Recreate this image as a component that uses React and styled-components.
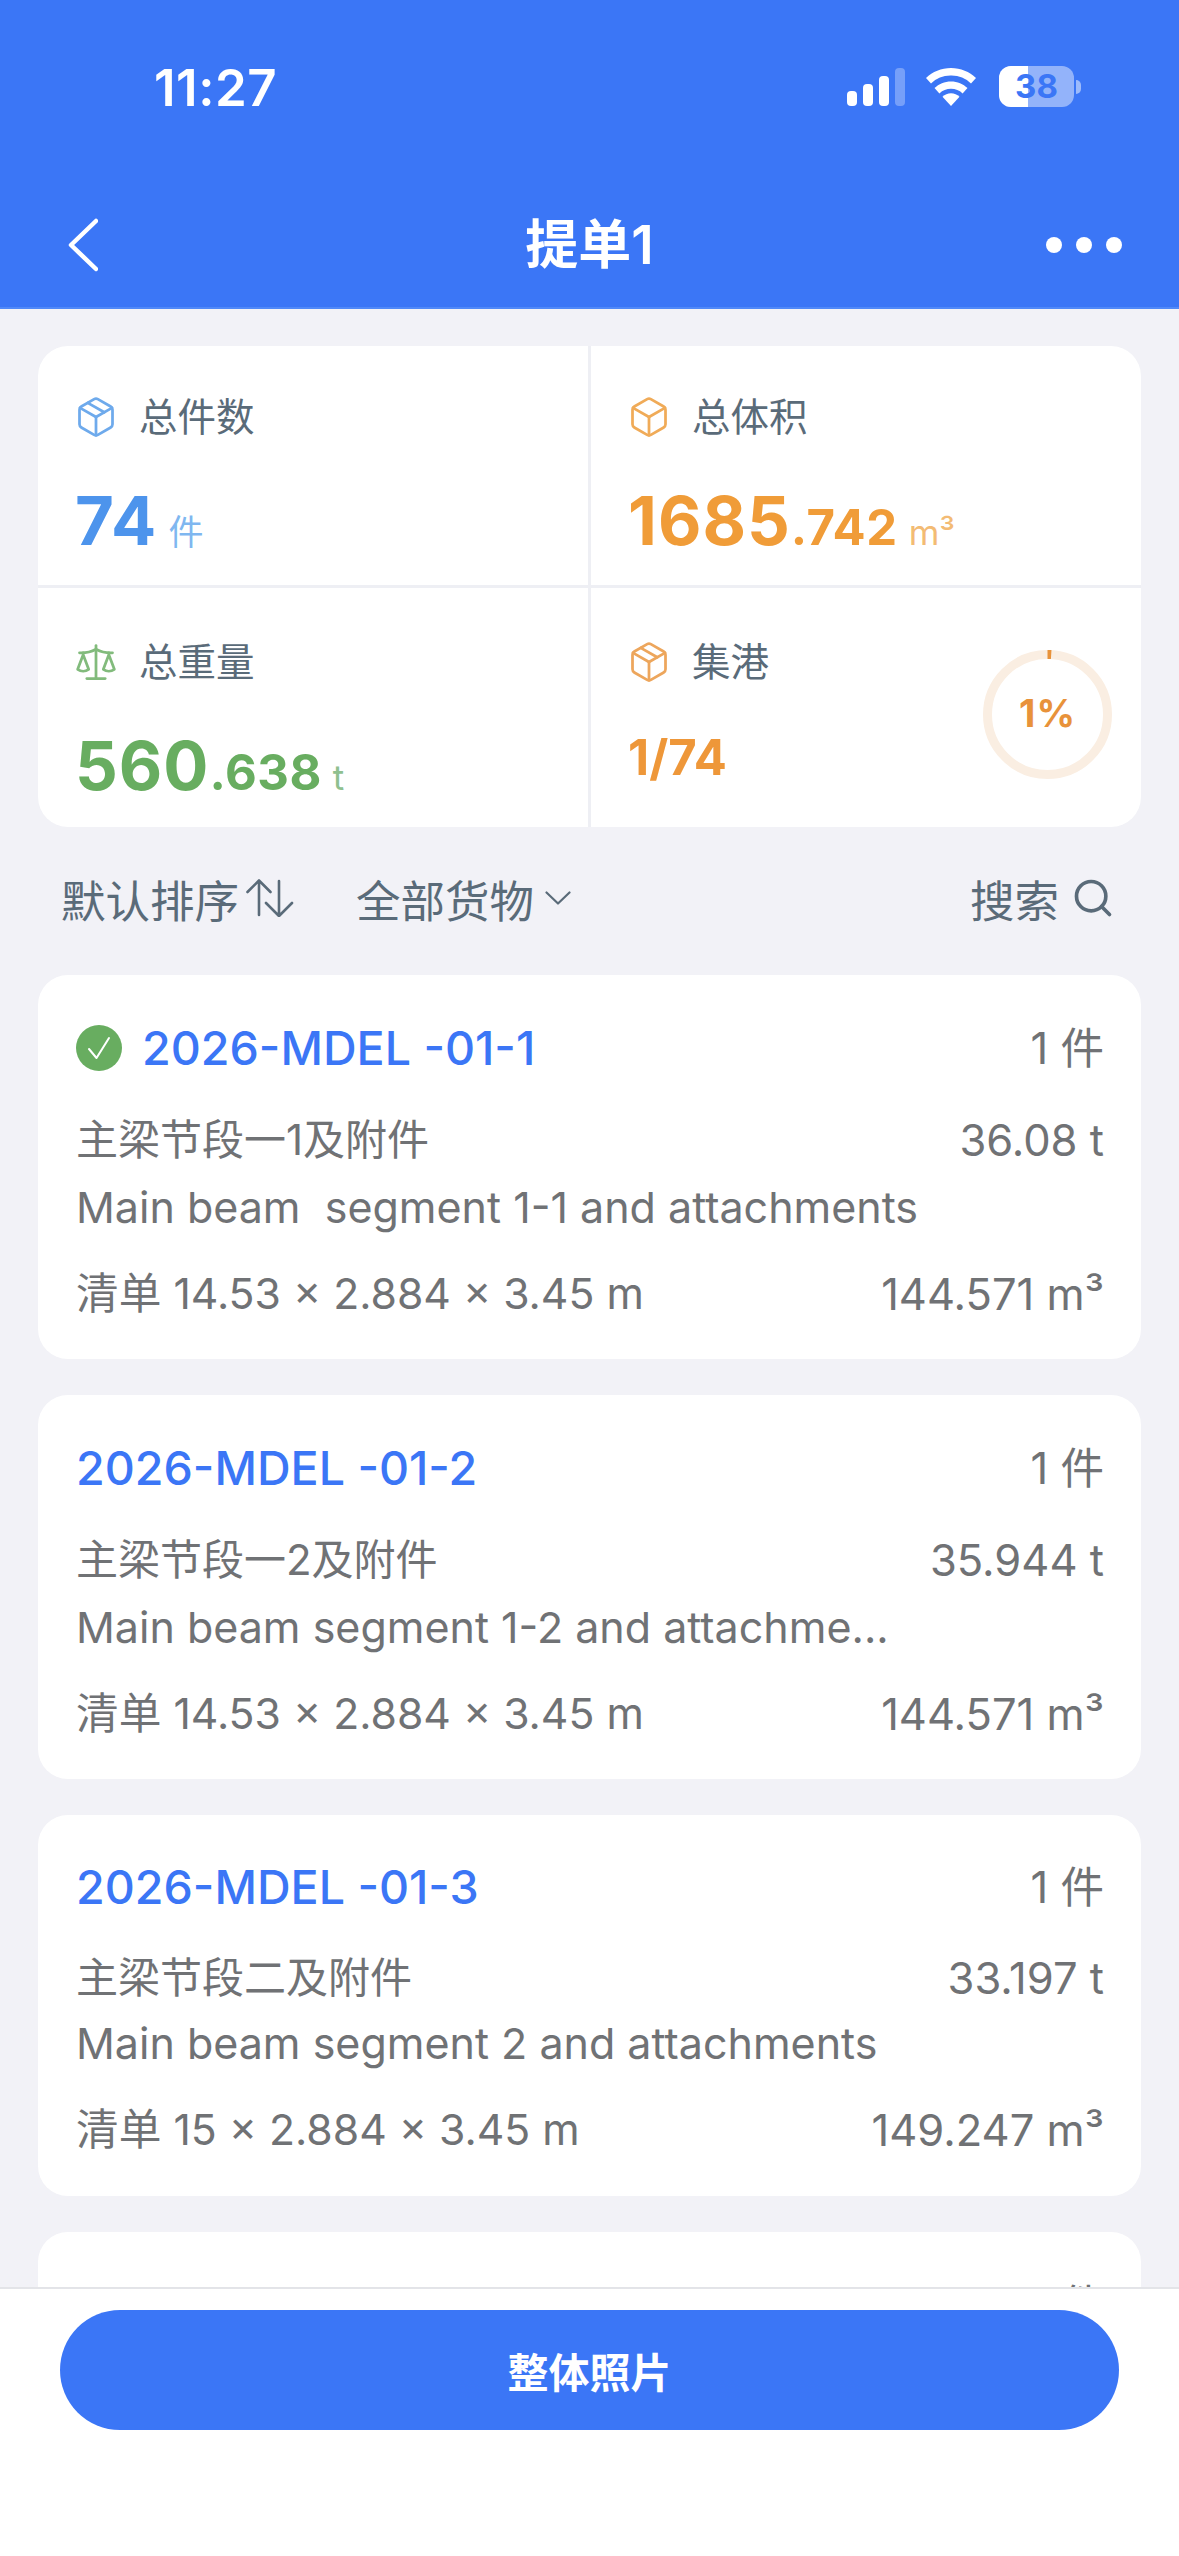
import React from "react";
import styled, { createGlobalStyle } from "styled-components";
import { Package, Box, Scale, Search } from "lucide-react";

const Global = createGlobalStyle`
  html, body { margin: 0; padding: 0; background: #f2f2f7; }
  * { box-sizing: border-box; }
`;

const sans = `Inter, "Noto Sans CJK SC", sans-serif`;

const Page = styled.div`
  width: 1179px;
  height: 2556px;
  display: flex;
  flex-direction: column;
  overflow: hidden;
  background: #f2f2f7;
  font-family: ${sans};
`;

const Header = styled.header`
  height: 309px;
  flex: none;
  background: #3b76f6;
  border-bottom: 2px solid #5089f8;
  color: #fff;
`;

const StatusBar = styled.div`
  height: 108px;
  padding: 60px 98px 0 154px;
  display: flex;
  justify-content: space-between;
  align-items: flex-start;
`;

const Time = styled.div`
  font-size: 51px;
  line-height: 56px;
  font-weight: 600;
  letter-spacing: 0.5px;
`;

const StatusIcons = styled.div`
  display: flex;
  align-items: center;
  margin-top: 6px;
`;

const Battery = styled.div`
  position: relative;
  width: 75px;
  height: 41px;
  margin-left: 23px;
  border-radius: 12px;
  background: rgba(255, 255, 255, 0.45);
  overflow: hidden;
  &::before {
    content: "";
    position: absolute;
    inset: 0 auto 0 0;
    width: 29px;
    background: #fff;
  }
`;

const BatteryText = styled.span`
  position: absolute;
  inset: 0;
  text-align: center;
  font-size: 33px;
  line-height: 41px;
  font-weight: 700;
  color: #3b76f6;
`;

const BatteryNib = styled.div`
  width: 5px;
  height: 14px;
  margin-left: 2px;
  border-radius: 0 5px 5px 0;
  background: rgba(255, 255, 255, 0.5);
`;

const NavBar = styled.nav`
  height: 90px;
  margin-top: 92px;
  padding: 0 57px;
  display: grid;
  grid-template-columns: 1fr auto 1fr;
  align-items: center;
`;

const BackButton = styled.span`
  display: flex;
  margin-left: 11px;
`;

const Title = styled.h1`
  margin: 0;
  font-size: 53px;
  line-height: 60px;
  font-weight: 600;
`;

const Dots = styled.div`
  justify-self: end;
  display: flex;
  gap: 14px;
`;

const Dot = styled.span`
  width: 16px;
  height: 16px;
  border-radius: 50%;
  background: #fff;
`;

const Content = styled.main`
  flex: 1;
  min-height: 0;
  overflow: hidden;
  padding: 37px 38px 0;
`;

const StatsCard = styled.section`
  display: grid;
  grid-template-columns: 1fr 1fr;
  grid-auto-rows: 239px;
  gap: 3px;
  background: #eeeff4;
  border-radius: 30px;
  overflow: hidden;
`;

const StatCell = styled.div`
  position: relative;
  background: #fff;
  padding: ${(p) => (p.$bottom ? "52px" : "49px")} 37px 0;
`;

const StatLabel = styled.div`
  display: flex;
  align-items: center;
  gap: 21px;
  height: 44px;
  font-size: 38.5px;
  line-height: 44px;
  color: #5a6b79;
  & > svg {
    margin-left: -1px;
  }
`;

const ValueRow = styled.div`
  display: flex;
  align-items: baseline;
  margin-top: 47px;
  font-weight: 700;
  font-size: 67px;
  line-height: 70px;
  letter-spacing: 1px;
  color: ${(p) => p.$color};
`;

const Decimal = styled.span`
  font-size: 49px;
  letter-spacing: 0.5px;
`;

const Unit = styled.span`
  margin-left: 11px;
  font-weight: 400;
  font-size: 35px;
  letter-spacing: 0;
  color: ${(p) => p.$color};
`;

const Small = styled.div`
  margin-top: 46px;
  font-weight: 700;
  font-size: 49px;
  line-height: 56px;
  color: #ee9739;
`;

const Ring = styled.div`
  position: absolute;
  right: 29px;
  top: 62px;
  width: 129px;
  height: 129px;
`;

const RingText = styled.span`
  position: absolute;
  inset: 0;
  padding-bottom: 4px;
  display: flex;
  align-items: center;
  justify-content: center;
  font-weight: 700;
  font-size: 38px;
  letter-spacing: 1px;
  color: #e8923a;
`;

const SortBar = styled.div`
  height: 148px;
  padding: 0 26px 6px 23px;
  display: flex;
  align-items: center;
  color: #5a6b79;
  font-size: 44.5px;
`;

const SortItem = styled.div`
  display: flex;
  align-items: center;
  gap: ${(p) => p.$gap}px;
  margin-left: ${(p) => p.$left || 0}px;
  &:last-child {
    margin-left: auto;
  }
`;

const CargoList = styled.div`
  display: flex;
  flex-direction: column;
  gap: 36px;
`;

const Card = styled.article`
  background: #fff;
  border-radius: 30px;
  padding: ${(p) => (p.$compact ? "44px" : "45px")} 37px 0 38px;
  height: ${(p) => (p.$compact ? 381 : 384)}px;
  flex: none;
`;

const Row = styled.div`
  display: flex;
  justify-content: space-between;
  align-items: center;
  height: 56px;
  margin-top: ${(p) => p.$top || 0}px;
  font-size: 42.7px;
  line-height: 56px;
  color: #707275;
  white-space: pre;
`;

const NameZh = styled.span`
  font-size: 42px;
`;

const NameEn = styled.span`
  font-size: 43px;
`;

const RightValue = styled.span`
  font-size: 43.5px;
`;

const CargoTitle = styled.div`
  display: flex;
  align-items: center;
  gap: 20px;
  font-size: 46.6px;
  font-weight: 500;
  color: #3b76f6;
`;

const CheckBadge = styled.span`
  width: 46px;
  height: 46px;
  border-radius: 50%;
  background: #68ad60;
  display: flex;
  align-items: center;
  justify-content: center;
`;

const Footer = styled.footer`
  flex: none;
  height: 269px;
  background: #fff;
  border-top: 2px solid #e3e4e8;
  padding: 21px 60px 0;
`;

const Button = styled.button`
  width: 100%;
  height: 120px;
  border: 0;
  border-radius: 60px;
  background: #3b76f6;
  color: #fff;
  font-family: ${sans};
  font-size: 41px;
  font-weight: 600;
`;

const Signal = () => (
  <svg width="58" height="38" viewBox="0 0 58 38" fill="#fff">
    <rect x="0" y="23" width="10" height="15" rx="4" />
    <rect x="16" y="16" width="10" height="22" rx="4" />
    <rect x="32" y="8" width="10" height="30" rx="4" />
    <rect x="48" y="0" width="10" height="38" rx="4" opacity="0.3" />
  </svg>
);

const WifiGlyph = styled.svg`
  margin-left: 21px;
`;

const Wifi = () => (
  <WifiGlyph width="50" height="38" viewBox="0 0 50 38" fill="#fff">
    <path d="M25 38 16.5 28.8a12 12 0 0 1 17 0Z" />
    <path d="M25 13.4c6.4 0 12.2 2.5 16.5 6.600l-4.900 5.400A17 17 0 0 0 25 20.800a17 17 0 0 0-11.600 4.600L8.500 20c4.300-4.100 10.100-6.600 16.500-6.600Z" />
    <path d="M25 0c9.700 0 18.500 3.800 25 10l-5 5.400A28 28 0 0 0 25 7.500a28 28 0 0 0-20 7.900L0 10C6.500 3.800 15.300 0 25 0Z" />
  </WifiGlyph>
);

const BackArrow = () => (
  <svg width="30" height="54" viewBox="0 0 30 54" fill="none" stroke="#fff" strokeWidth="4.5" strokeLinecap="round" strokeLinejoin="round">
    <path d="M28 3 3 27l25 24" />
  </svg>
);

const SortArrows = () => (
  <svg width="48" height="38" viewBox="0 0 48 38" fill="none" stroke="#5a6b79" strokeWidth="2.6" strokeLinecap="round" strokeLinejoin="round">
    <path d="M1.500 13 13 1.500 24.500 13M13 1.500V36" />
    <path d="M20 24 33 37l13-13M33 37V2" />
  </svg>
);

const Caret = () => (
  <svg width="26" height="14" viewBox="0 0 26 14" fill="none" stroke="#5a6b79" strokeWidth="2.2" strokeLinecap="round" strokeLinejoin="round">
    <path d="M1.500 1.500 13 12.500 24.500 1.500" />
  </svg>
);

const Tick = () => (
  <svg width="24" height="24" viewBox="0 0 24 24" fill="none" stroke="#fff" strokeWidth="2" strokeLinecap="round" strokeLinejoin="round">
    <path d="M2 13l7.500 9L22 2" />
  </svg>
);

const ProgressRing = ({ percent }) => {
  const r = 60;
  const c = 2 * Math.PI * r;
  return (
    <Ring>
      <svg width="129" height="129" viewBox="0 0 129 129">
        <circle cx="64.5" cy="64.5" r={r} fill="none" stroke="#faeee2" strokeWidth="9" />
        <circle
          cx="64.5"
          cy="64.5"
          r={r}
          fill="none"
          stroke="#e8923a"
          strokeWidth="9"
          strokeDasharray={`${(c * percent) / 100} ${c}`}
          transform="rotate(-90 64.5 64.5)"
        />
      </svg>
      <RingText>{percent}%</RingText>
    </Ring>
  );
};

const cargo = [
  { code: "2026-MDEL -01-1", done: true, zh: "主梁节段一1及附件", weight: "36.08 t", en: "Main beam  segment 1-1 and attachments", size: "清单 14.53 × 2.884 × 3.45 m", vol: "144.571 m³" },
  { code: "2026-MDEL -01-2", zh: "主梁节段一2及附件", weight: "35.944 t", en: "Main beam segment 1-2 and attachme...", size: "清单 14.53 × 2.884 × 3.45 m", vol: "144.571 m³" },
  { code: "2026-MDEL -01-3", compact: true, zh: "主梁节段二及附件", weight: "33.197 t", en: "Main beam segment 2 and attachments", size: "清单 15 × 2.884 × 3.45 m", vol: "149.247 m³" },
];

export default function App() {
  return (
    <Page>
      <Global />
      <Header>
        <StatusBar>
          <Time>11:27</Time>
          <StatusIcons>
            <Signal />
            <Wifi />
            <Battery>
              <BatteryText>38</BatteryText>
            </Battery>
            <BatteryNib />
          </StatusIcons>
        </StatusBar>
        <NavBar>
          <BackButton>
            <BackArrow />
          </BackButton>
          <Title>提单1</Title>
          <Dots>
            <Dot />
            <Dot />
            <Dot />
          </Dots>
        </NavBar>
      </Header>
      <Content>
        <StatsCard>
          <StatCell>
            <StatLabel>
              <Package size={44} strokeWidth={1.5} color="#6eaaec" />
              总件数
            </StatLabel>
            <ValueRow $color="#4d94ec">
              74
              <Unit $color="#7fb7f0">件</Unit>
            </ValueRow>
          </StatCell>
          <StatCell>
            <StatLabel>
              <Box size={44} strokeWidth={1.5} color="#f0ab58" />
              总体积
            </StatLabel>
            <ValueRow $color="#f09c38">
              1685<Decimal>.742</Decimal>
              <Unit $color="#f3bb74">m³</Unit>
            </ValueRow>
          </StatCell>
          <StatCell $bottom>
            <StatLabel>
              <Scale size={44} strokeWidth={1.5} color="#82bb7c" />
              总重量
            </StatLabel>
            <ValueRow $color="#68ad60">
              560<Decimal>.638</Decimal>
              <Unit $color="#8fc08f">t</Unit>
            </ValueRow>
          </StatCell>
          <StatCell $bottom>
            <StatLabel>
              <Package size={44} strokeWidth={1.5} color="#eda65c" />
              集港
            </StatLabel>
            <Small>1/74</Small>
            <ProgressRing percent={1} />
          </StatCell>
        </StatsCard>
        <SortBar>
          <SortItem $gap={7}>
            默认排序
            <SortArrows />
          </SortItem>
          <SortItem $gap={11} $left={62}>
            全部货物
            <Caret />
          </SortItem>
          <SortItem $gap={12}>
            搜索
            <Search size={44} strokeWidth={2} />
          </SortItem>
        </SortBar>
        <CargoList>
          {cargo.map((c) => (
            <Card key={c.code} $compact={c.compact}>
              <Row>
                <CargoTitle>
                  {c.done && (
                    <CheckBadge>
                      <Tick />
                    </CheckBadge>
                  )}
                  {c.code}
                </CargoTitle>
                <RightValue>1 件</RightValue>
              </Row>
              <Row $top={c.compact ? 35 : 36}>
                <NameZh>{c.zh}</NameZh>
                <RightValue>{c.weight}</RightValue>
              </Row>
              <Row $top={c.compact ? 9 : 11}>
                <NameEn>{c.en}</NameEn>
              </Row>
              <Row $top={31}>
                <span>{c.size}</span>
                <RightValue>{c.vol}</RightValue>
              </Row>
            </Card>
          ))}
          <Card>
            <Row>
              <CargoTitle>2026-MDEL -01-4</CargoTitle>
              <RightValue>1 件</RightValue>
            </Row>
          </Card>
        </CargoList>
      </Content>
      <Footer>
        <Button>整体照片</Button>
      </Footer>
    </Page>
  );
}
